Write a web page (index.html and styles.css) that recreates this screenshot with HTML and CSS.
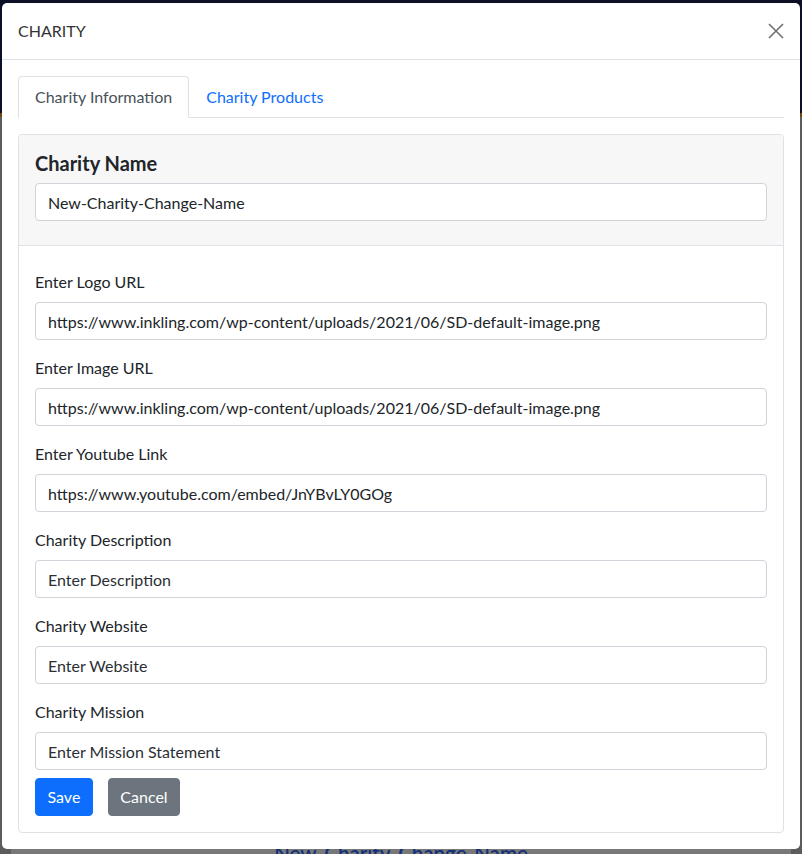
FILE: index.html
```html
<!DOCTYPE html>
<html lang="en">
<head>
<meta charset="utf-8">
<title>Charity</title>
<link rel="stylesheet" href="styles.css">
</head>
<body>
<div class="page">
  <div class="navbar"></div>
  <div class="page-content">
    <div class="page-card">
      <h2 class="page-title">New-Charity-Change-Name</h2>
    </div>
  </div>
</div>

<div class="modal">
  <div class="modal-header">
    <span class="modal-title">CHARITY</span>
    <button class="btn-close" type="button" aria-label="Close">
      <svg width="16" height="16" viewBox="0 0 16 16"><path d="M1 1L15 15M15 1L1 15" stroke="#6f6f6f" stroke-width="1.6" fill="none"/></svg>
    </button>
  </div>
  <div class="modal-body">
    <ul class="tabs">
      <li class="tab active">Charity Information</li>
      <li class="tab">Charity Products</li>
    </ul>
    <div class="card">
      <div class="card-header">
        <h3 class="card-title">Charity Name</h3>
        <input class="field" type="text" value="New-Charity-Change-Name">
      </div>
      <div class="card-body">
        <div class="group">
          <label class="label">Enter Logo URL</label>
          <input class="field" type="text" value="https://www.inkling.com/wp-content/uploads/2021/06/SD-default-image.png">
        </div>
        <div class="group">
          <label class="label">Enter Image URL</label>
          <input class="field" type="text" value="https://www.inkling.com/wp-content/uploads/2021/06/SD-default-image.png">
        </div>
        <div class="group">
          <label class="label">Enter Youtube Link</label>
          <input class="field" type="text" value="https://www.youtube.com/embed/JnYBvLY0GOg">
        </div>
        <div class="group">
          <label class="label">Charity Description</label>
          <input class="field" type="text" placeholder="Enter Description">
        </div>
        <div class="group">
          <label class="label">Charity Website</label>
          <input class="field" type="text" placeholder="Enter Website">
        </div>
        <div class="group last">
          <label class="label">Charity Mission</label>
          <input class="field" type="text" placeholder="Enter Mission Statement">
        </div>
        <div class="actions">
          <button class="btn btn-primary" type="button">Save</button>
          <button class="btn btn-secondary" type="button">Cancel</button>
        </div>
      </div>
    </div>
  </div>
</div>
</body>
</html>
```

FILE: styles.css
```css
* { box-sizing: border-box; }
html, body { margin: 0; padding: 0; }
body {
  width: 802px;
  height: 854px;
  overflow: hidden;
  background: #5c5c5c;
  font-family: "Lato", "Noto Sans", sans-serif;
  color: #212529;
  position: relative;
}
.page { width: 802px; height: 854px; }
.navbar {
  height: 117px;
  background: #0b1027;
  border-bottom: 4px solid #6e4510;
}
.page-content { padding: 0 11px; }
.page-card {
  height: 737px;
  background: #787878;
  display: flex;
  align-items: flex-end;
  justify-content: center;
}
.page-title {
  margin: 0 0 -12px 0;
  font-size: 20.5px;
  font-weight: 600;
  color: #13307a;
  line-height: 26px;
}

.modal {
  position: absolute;
  top: 3px;
  left: 2px;
  width: 798px;
  background: #fff;
  border-radius: 5px;
}
.modal-header {
  display: flex;
  align-items: center;
  justify-content: space-between;
  padding: 16px;
  border-bottom: 1px solid #dee2e6;
}
.modal-title {
  font-size: 16px;
  line-height: 24px;
  color: #333;
}
.btn-close {
  border: 0;
  background: transparent;
  padding: 0;
  width: 16px;
  height: 16px;
  display: flex;
}
.modal-body { padding: 16px; }
.tabs {
  list-style: none;
  margin: 0;
  padding: 0;
  display: flex;
  border-bottom: 1px solid #dee2e6;
}
.tab {
  font-size: 16px;
  line-height: 24px;
  padding: 8px 16px;
  border: 1px solid transparent;
  border-radius: 4px 4px 0 0;
  margin-bottom: -1px;
  color: #0d6efd;
}
.tab.active {
  color: #495057;
  background: #fff;
  border-color: #dee2e6 #dee2e6 #fff;
}
.card {
  margin-top: 16px;
  border: 1px solid #dee2e6;
  border-radius: 4px;
}
.card-header {
  background: #f7f7f7;
  padding: 16px 16px 24px;
  border-bottom: 1px solid #dee2e6;
  border-radius: 4px 4px 0 0;
}
.card-title {
  margin: 0 0 8px;
  font-size: 20px;
  line-height: 24px;
  font-weight: 700;
  color: #212529;
}
.card-body { padding: 24px 16px 16px; }
.group { display: flex; flex-direction: column; margin-bottom: 16px; }
.group.last { margin-bottom: 8px; }
.label {
  font-size: 16px;
  line-height: 24px;
  margin-bottom: 8px;
  color: #212529;
}
.field {
  display: block;
  width: 100%;
  height: 38px;
  padding: 6px 12px;
  font-family: inherit;
  font-size: 16px;
  line-height: 24px;
  color: #212529;
  background: #fff;
  border: 1px solid #ced4da;
  border-radius: 4px;
  outline: none;
}
.field::placeholder { color: #2b2f33; opacity: 1; }
.actions { display: flex; gap: 15px; }
.btn {
  height: 38px;
  padding: 6px 11.5px;
  font-family: inherit;
  font-size: 16px;
  line-height: 24px;
  color: #fff;
  border: 1px solid transparent;
  border-radius: 4px;
}
.btn-primary { background: #0d6efd; border-color: #0d6efd; }
.btn-secondary { background: #6c757d; border-color: #6c757d; }
```
